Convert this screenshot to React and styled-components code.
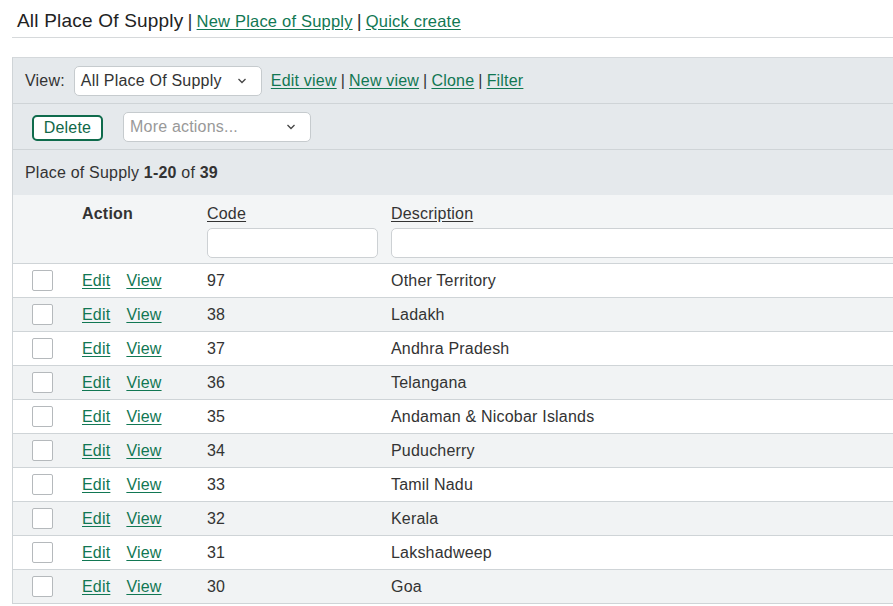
import React from "react";
import styled, { createGlobalStyle } from "styled-components";

const GlobalStyle = createGlobalStyle`
  html, body {
    margin: 0;
    padding: 0;
    overflow: hidden;
    background: #fff;
    font-family: "Liberation Sans", Arial, sans-serif;
    color: #333;
    letter-spacing: 0.2px;
  }
`;

const Page = styled.div`
  padding-left: 12px;
  width: 1000px;
`;

const TitleBar = styled.div`
  display: flex;
  align-items: baseline;
  height: 38px;
  padding: 10px 0 0 5px;
  box-sizing: border-box;
  border-bottom: 1px solid #d6d9db;
  font-size: 19px;
  color: #222;
`;

const Sep = styled.span`
  margin: 0 ${({ $gap }) => $gap || 4}px;
  color: #333;
`;

const Link = styled.a`
  color: #117753;
  text-decoration: underline;
  text-underline-offset: 2px;
  font-size: ${({ $size }) => $size || 16}px;
  cursor: pointer;
`;

const Panel = styled.div`
  margin-top: 19px;
  border-left: 1px solid #cfd4d7;
  border-top: 1px solid #d4d8db;
  background: #e5e9ec;
`;

const Toolbar = styled.div`
  display: flex;
  align-items: center;
  gap: 9px;
  height: 45px;
  padding-left: 12px;
  border-bottom: 1px solid #cfd4d7;
  font-size: 16px;
`;

const Select = styled.div`
  display: flex;
  align-items: center;
  justify-content: space-between;
  box-sizing: border-box;
  width: ${({ $w }) => $w}px;
  height: ${({ $h }) => $h || 30}px;
  padding: 0 14px 0 6px;
  background: #fff;
  border: 1px solid #c6cbce;
  border-radius: 5px;
  color: ${({ $muted }) => ($muted ? "#999" : "#333")};
  font-size: 16px;
`;

const Chevron = () => (
  <svg width="10" height="6" viewBox="0 0 10 6">
    <path d="M1.5 1l3.5 3.5L8.5 1" fill="none" stroke="#444" strokeWidth="1.3" />
  </svg>
);

const ViewLinks = styled.div`
  display: flex;
  align-items: baseline;
`;

const ActionRow = styled.div`
  display: flex;
  align-items: center;
  gap: 20px;
  height: 45px;
  padding-left: 19px;
  border-bottom: 1px solid #cfd4d7;
`;

const OutlineButton = styled.button`
  box-sizing: border-box;
  width: 71px;
  height: 26px;
  margin-top: 2px;
  background: #fff;
  border: 2px solid #0f6b4c;
  border-radius: 5px;
  color: #116848;
  font-family: inherit;
  font-size: 16px;
  letter-spacing: 0.2px;
  padding: 0;
`;

const Summary = styled.div`
  height: 45px;
  display: flex;
  align-items: center;
  padding-left: 12px;
  font-size: 16px;
  color: #333;
`;

const Grid = styled.div`
  display: grid;
  grid-template-columns: 69px 125px 184px 1fr;
  align-items: center;
`;

const HeadRow = styled(Grid)`
  height: 68px;
  align-items: start;
  background: #f3f5f6;
  border-bottom: 1px solid #cfd4d7;
  font-size: 16px;
  color: #333;
`;

const HeadCell = styled.div`
  display: flex;
  flex-direction: column;
  gap: 5px;
  padding-top: 10px;
`;

const HeadLabel = styled.span`
  text-decoration: ${({ $sort }) => ($sort ? "underline" : "none")};
  text-underline-offset: 2px;
  font-weight: ${({ $sort }) => ($sort ? "normal" : "bold")};
`;

const FilterInput = styled.div`
  box-sizing: border-box;
  height: 30px;
  width: ${({ $w }) => ($w ? `${$w}px` : "auto")};
  background: #fff;
  border: 1px solid #cdd1d4;
  border-radius: 5px;
`;

const Row = styled(Grid)`
  height: 33px;
  background: ${({ $alt }) => ($alt ? "#f1f3f4" : "#fff")};
  border-bottom: 1px solid #cfd4d7;
  font-size: 16px;
  color: #333;
`;

const Cell = styled.div`
  display: flex;
  align-items: center;
  gap: 16px;
  padding-left: ${({ $pl }) => $pl || 0}px;
`;

const Checkbox = styled.span`
  display: block;
  box-sizing: border-box;
  width: 21px;
  height: 21px;
  background: #fff;
  border: 1px solid #b5b9bc;
  border-radius: 2px;
`;

const rows = [
  ["97", "Other Territory"],
  ["38", "Ladakh"],
  ["37", "Andhra Pradesh"],
  ["36", "Telangana"],
  ["35", "Andaman & Nicobar Islands"],
  ["34", "Puducherry"],
  ["33", "Tamil Nadu"],
  ["32", "Kerala"],
  ["31", "Lakshadweep"],
  ["30", "Goa"],
];

export default function App() {
  return (
    <Page>
      <GlobalStyle />
      <TitleBar>
        <span>All Place Of Supply</span>
        <Sep>|</Sep>
        <Link $size={16.5}>New Place of Supply</Link>
        <Sep>|</Sep>
        <Link $size={16.5}>Quick create</Link>
      </TitleBar>
      <Panel>
        <Toolbar>
          <span>View:</span>
          <Select $w={188}>
            <span>All Place Of Supply</span>
            <Chevron />
          </Select>
          <ViewLinks>
            <Link>Edit view</Link>
            <Sep>|</Sep>
            <Link>New view</Link>
            <Sep>|</Sep>
            <Link>Clone</Link>
            <Sep>|</Sep>
            <Link>Filter</Link>
          </ViewLinks>
        </Toolbar>
        <ActionRow>
          <OutlineButton>Delete</OutlineButton>
          <Select $w={188} $h={30} $muted>
            <span>More actions...</span>
            <Chevron />
          </Select>
        </ActionRow>
        <Summary>
          Place of Supply&nbsp;<b>1-20</b>&nbsp;of&nbsp;<b>39</b>
        </Summary>
        <HeadRow>
          <div />
          <HeadCell>
            <HeadLabel>Action</HeadLabel>
          </HeadCell>
          <HeadCell>
            <HeadLabel $sort>Code</HeadLabel>
            <FilterInput $w={171} />
          </HeadCell>
          <HeadCell>
            <HeadLabel $sort>Description</HeadLabel>
            <FilterInput />
          </HeadCell>
        </HeadRow>
        {rows.map(([code, desc], i) => (
          <Row key={code} $alt={i % 2 === 1}>
            <Cell $pl={19}>
              <Checkbox />
            </Cell>
            <Cell>
              <Link>Edit</Link>
              <Link>View</Link>
            </Cell>
            <Cell>{code}</Cell>
            <Cell>{desc}</Cell>
          </Row>
        ))}
      </Panel>
    </Page>
  );
}
